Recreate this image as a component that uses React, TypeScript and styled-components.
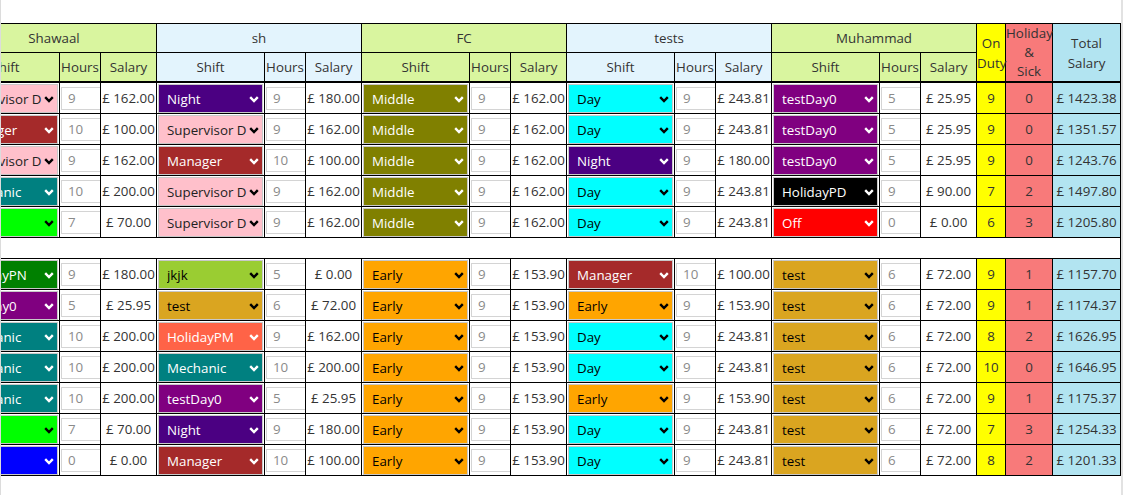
import styled, { createGlobalStyle } from "styled-components";
import { Fragment, useLayoutEffect, useRef } from "react";

const GlobalStyle = createGlobalStyle`
  body {
    margin: 0;
    background: #fff;
    font-family: "Open Sans", "Liberation Sans", sans-serif;
  }
`;

const GREEN = "#d9f59f";
const BLUE = "#e3f4fd";
const YELLOW = "#ffff00";
const CORAL = "#f87a7a";
const TOTAL = "#b2e4f1";
const FONT = `13.33px "Open Sans", "Liberation Sans", sans-serif`;

type ShiftName =
  | "Supervisor D"
  | "Manager"
  | "Mechanic"
  | "Late"
  | "Sick"
  | "Night"
  | "Middle"
  | "Day"
  | "testDay0"
  | "HolidayPD"
  | "Off"
  | "HolidayPN"
  | "jkjk"
  | "test"
  | "Early"
  | "HolidayPM";

const SHIFTS: Record<ShiftName, { bg: string; fg: string }> = {
  "Supervisor D": { bg: "#ffc0cb", fg: "#222" },
  Manager: { bg: "#a52a2a", fg: "#fff" },
  Mechanic: { bg: "#008080", fg: "#fff" },
  Late: { bg: "#00ff00", fg: "#000" },
  Sick: { bg: "#0000ff", fg: "#fff" },
  Night: { bg: "#4b0082", fg: "#fff" },
  Middle: { bg: "#808000", fg: "#fff" },
  Day: { bg: "#00ffff", fg: "#000" },
  testDay0: { bg: "#800080", fg: "#fff" },
  HolidayPD: { bg: "#000000", fg: "#fff" },
  Off: { bg: "#ff0000", fg: "#fff" },
  HolidayPN: { bg: "#008000", fg: "#fff" },
  jkjk: { bg: "#9acd32", fg: "#000" },
  test: { bg: "#daa520", fg: "#000" },
  Early: { bg: "#ffa500", fg: "#000" },
  HolidayPM: { bg: "#ff6347", fg: "#fff" },
};

const EMPLOYEES = [
  { name: "Shawaal", bg: GREEN },
  { name: "sh", bg: BLUE },
  { name: "FC", bg: GREEN },
  { name: "tests", bg: BLUE },
  { name: "Muhammad", bg: GREEN },
];

type Entry = [ShiftName, number, number];
type Row = { entries: Entry[]; onDuty: number; off: number; total: number };

const TOP_ROWS: Row[] = [
  {
    entries: [["Supervisor D", 9, 162], ["Night", 9, 180], ["Middle", 9, 162], ["Day", 9, 243.81], ["testDay0", 5, 25.95]],
    onDuty: 9, off: 0, total: 1423.38,
  },
  {
    entries: [["Manager", 10, 100], ["Supervisor D", 9, 162], ["Middle", 9, 162], ["Day", 9, 243.81], ["testDay0", 5, 25.95]],
    onDuty: 9, off: 0, total: 1351.57,
  },
  {
    entries: [["Supervisor D", 9, 162], ["Manager", 10, 100], ["Middle", 9, 162], ["Night", 9, 180], ["testDay0", 5, 25.95]],
    onDuty: 9, off: 0, total: 1243.76,
  },
  {
    entries: [["Mechanic", 10, 200], ["Supervisor D", 9, 162], ["Middle", 9, 162], ["Day", 9, 243.81], ["HolidayPD", 9, 90]],
    onDuty: 7, off: 2, total: 1497.8,
  },
  {
    entries: [["Late", 7, 70], ["Supervisor D", 9, 162], ["Middle", 9, 162], ["Day", 9, 243.81], ["Off", 0, 0]],
    onDuty: 6, off: 3, total: 1205.8,
  },
];

const BOTTOM_ROWS: Row[] = [
  {
    entries: [["HolidayPN", 9, 180], ["jkjk", 5, 0], ["Early", 9, 153.9], ["Manager", 10, 100], ["test", 6, 72]],
    onDuty: 9, off: 1, total: 1157.7,
  },
  {
    entries: [["testDay0", 5, 25.95], ["test", 6, 72], ["Early", 9, 153.9], ["Early", 9, 153.9], ["test", 6, 72]],
    onDuty: 9, off: 1, total: 1174.37,
  },
  {
    entries: [["Mechanic", 10, 200], ["HolidayPM", 9, 162], ["Early", 9, 153.9], ["Day", 9, 243.81], ["test", 6, 72]],
    onDuty: 8, off: 2, total: 1626.95,
  },
  {
    entries: [["Mechanic", 10, 200], ["Mechanic", 10, 200], ["Early", 9, 153.9], ["Day", 9, 243.81], ["test", 6, 72]],
    onDuty: 10, off: 0, total: 1646.95,
  },
  {
    entries: [["Mechanic", 10, 200], ["testDay0", 5, 25.95], ["Early", 9, 153.9], ["Early", 9, 153.9], ["test", 6, 72]],
    onDuty: 9, off: 1, total: 1175.37,
  },
  {
    entries: [["Late", 7, 70], ["Night", 9, 180], ["Early", 9, 153.9], ["Day", 9, 243.81], ["test", 6, 72]],
    onDuty: 7, off: 3, total: 1254.33,
  },
  {
    entries: [["Sick", 0, 0], ["Manager", 10, 100], ["Early", 9, 153.9], ["Day", 9, 243.81], ["test", 6, 72]],
    onDuty: 8, off: 2, total: 1201.33,
  },
];

const Frame = styled.div`
  box-sizing: border-box;
  width: 1123px;
  height: 100vh;
  overflow: hidden;
  padding-top: 23px;
  border-left: 1px solid #dcdcdc;
  border-right: 2px solid #e2e2e2;
`;

const Scroller = styled.div`
  overflow-x: auto;
  scrollbar-width: none;
  &::-webkit-scrollbar {
    display: none;
  }
`;

const Sheet = styled.table`
  border-collapse: collapse;
  table-layout: fixed;
  width: 1169px;
  color: #333;
  font: ${FONT};
`;

const HeadCell = styled.th<{ $bg: string; $thick?: boolean; $lh?: number }>`
  background: ${(p) => p.$bg};
  border: 1px solid #000;
  border-bottom: ${(p) => (p.$thick ? "2px" : "1px")} solid #000;
  font-weight: normal;
  padding: 0;
  height: 28px;
  line-height: ${(p) => p.$lh ?? 20}px;
  text-align: center;
  white-space: nowrap;
`;

const Cell = styled.td<{ $bg?: string }>`
  background: ${(p) => p.$bg ?? "#fff"};
  border: 1px solid #000;
  padding: 0;
  text-align: center;
  white-space: nowrap;
`;

const ShiftCell = styled(Cell)`
  padding: 1px 1px 0;
`;

const GapCell = styled.td`
  border: 1px solid #000;
  height: 20px;
  padding: 0;
  background: #fff;
`;

const ShiftBox = styled.div`
  position: relative;
  height: 29px;
`;

const ShiftSelect = styled.select<{ $bg: string; $fg: string }>`
  appearance: none;
  box-sizing: border-box;
  display: block;
  width: 100%;
  height: 100%;
  margin: 0;
  border: 1px solid #c8c8c8;
  border-radius: 0;
  background: ${(p) => p.$bg};
  color: ${(p) => p.$fg};
  font: ${FONT};
  padding: 0 14px 0 8px;
  outline: none;
`;

const Chevron = styled.svg`
  position: absolute;
  right: 4px;
  top: 50%;
  margin-top: -3px;
  pointer-events: none;
`;

const HoursInput = styled.input`
  display: block;
  box-sizing: border-box;
  width: 40px;
  height: 23px;
  margin: 0 0 0 1px;
  border: 1px solid #d4d4d4;
  padding: 0 0 0 6px;
  color: #8a8a8a;
  font: ${FONT};
  outline: none;
  appearance: textfield;
  &::-webkit-outer-spin-button,
  &::-webkit-inner-spin-button {
    -webkit-appearance: none;
    margin: 0;
  }
`;

const money = (n: number) => `£ ${n.toFixed(2)}`;

function Shift({ value }: { value: ShiftName }) {
  const { bg, fg } = SHIFTS[value];
  return (
    <ShiftBox>
      <ShiftSelect $bg={bg} $fg={fg} defaultValue={value}>
        {(Object.keys(SHIFTS) as ShiftName[]).map((s) => (
          <option key={s} value={s}>
            {s}
          </option>
        ))}
      </ShiftSelect>
      <Chevron width="10" height="7" viewBox="0 0 10 7">
        <polyline
          points="1.2,1.2 5,5 8.8,1.2"
          fill="none"
          stroke={fg === "#fff" ? "#fff" : "#000"}
          strokeWidth="2.4"
        />
      </Chevron>
    </ShiftBox>
  );
}

function DataRow({ row }: { row: Row }) {
  return (
    <tr>
      {row.entries.map(([shift, hours, salary], i) => (
        <Fragment key={i}>
          <ShiftCell>
            <Shift value={shift} />
          </ShiftCell>
          <Cell>
            <HoursInput type="number" defaultValue={hours} />
          </Cell>
          <Cell>{money(salary)}</Cell>
        </Fragment>
      ))}
      <Cell $bg={YELLOW}>{row.onDuty}</Cell>
      <Cell $bg={CORAL}>{row.off}</Cell>
      <Cell $bg={TOTAL}>{money(row.total)}</Cell>
    </tr>
  );
}

export default function App() {
  const scrollRef = useRef<HTMLDivElement>(null);
  useLayoutEffect(() => {
    const el = scrollRef.current;
    if (el) el.scrollLeft = el.scrollWidth;
  }, []);

  return (
    <>
      <GlobalStyle />
      <Frame>
        <Scroller ref={scrollRef}>
          <Sheet>
            <colgroup>
              {EMPLOYEES.map((e) => (
                <Fragment key={e.name}>
                  <col style={{ width: 108 }} />
                  <col style={{ width: 41 }} />
                  <col style={{ width: 56 }} />
                </Fragment>
              ))}
              <col style={{ width: 29 }} />
              <col style={{ width: 47 }} />
              <col style={{ width: 68 }} />
            </colgroup>
            <thead>
              <tr>
                {EMPLOYEES.map((e) => (
                  <HeadCell key={e.name} colSpan={3} $bg={e.bg}>
                    {e.name}
                  </HeadCell>
                ))}
                <HeadCell rowSpan={2} $bg={YELLOW} $thick>
                  On
                  <br />
                  Duty
                </HeadCell>
                <HeadCell rowSpan={2} $bg={CORAL} $thick $lh={19}>
                  Holiday
                  <br />
                  &amp;
                  <br />
                  Sick
                </HeadCell>
                <HeadCell rowSpan={2} $bg={TOTAL} $thick>
                  Total
                  <br />
                  Salary
                </HeadCell>
              </tr>
              <tr>
                {EMPLOYEES.map((e) => (
                  <Fragment key={e.name}>
                    <HeadCell $bg={e.bg} $thick>
                      Shift
                    </HeadCell>
                    <HeadCell $bg={e.bg} $thick>
                      Hours
                    </HeadCell>
                    <HeadCell $bg={e.bg} $thick>
                      Salary
                    </HeadCell>
                  </Fragment>
                ))}
              </tr>
            </thead>
            <tbody>
              {TOP_ROWS.map((r, i) => (
                <DataRow key={`t${i}`} row={r} />
              ))}
              <tr>
                <GapCell colSpan={18} />
              </tr>
              {BOTTOM_ROWS.map((r, i) => (
                <DataRow key={`b${i}`} row={r} />
              ))}
            </tbody>
          </Sheet>
        </Scroller>
      </Frame>
    </>
  );
}
